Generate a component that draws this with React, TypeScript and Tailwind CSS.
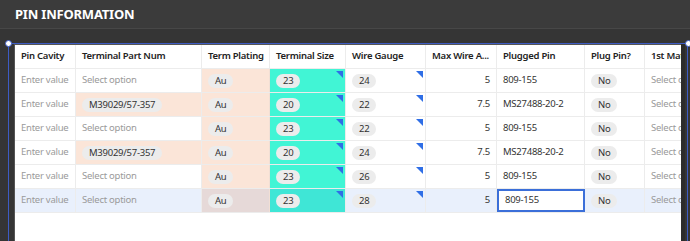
import React from "react";

const cols = [
  { name: "Pin Cavity", w: 61 },
  { name: "Terminal Part Num", w: 126 },
  { name: "Term Plating", w: 68 },
  { name: "Terminal Size", w: 76 },
  { name: "Wire Gauge", w: 80 },
  { name: "Max Wire A...", w: 71 },
  { name: "Plugged Pin", w: 88 },
  { name: "Plug Pin?", w: 60 },
  { name: "1st Mat...", w: 80 },
];

const rows = [
  { part: "", size: "23", gauge: "24", max: "5", plug: "809-155" },
  { part: "M39029/57-357", size: "20", gauge: "22", max: "7.5", plug: "MS27488-20-2" },
  { part: "", size: "23", gauge: "22", max: "5", plug: "809-155" },
  { part: "M39029/57-357", size: "20", gauge: "24", max: "7.5", plug: "MS27488-20-2" },
  { part: "", size: "23", gauge: "26", max: "5", plug: "809-155" },
  { part: "", size: "23", gauge: "28", max: "5", plug: "809-155" },
];

function Pill({ text }: { text: string }) {
  return (
    <span className="inline-flex h-[14px] items-center rounded-full bg-[#ececec] px-[7px] text-[9.5px] leading-none text-[#333]">
      {text}
    </span>
  );
}

function Tri() {
  return (
    <svg className="absolute right-[2px] top-[2px]" width="7" height="7" viewBox="0 0 7 7">
      <polygon points="0,0 7,0 7,7" fill="#2f6ee6" />
    </svg>
  );
}

export default function App() {
  return (
    <div
      className="relative h-[241px] w-[690px] overflow-hidden bg-[#353535] tracking-[-0.25px]"
      style={{ fontFamily: '"Noto Sans", "Open Sans", sans-serif' }}
    >
      <div className="flex h-[29px] items-center border-b border-[#474747] bg-[#3b3b3b] pl-[15px] pt-[1px]">
        <span className="text-[13px] font-bold tracking-[-0.2px] text-white">PIN INFORMATION</span>
      </div>

      <div className="pl-[14px] pt-[15px]">
        <div className="h-[200px] w-[668px] overflow-hidden border border-[#555] bg-white">
          <div className="flex h-[24px] border-b border-[#ececec]">
            {cols.map((c) => (
              <div
                key={c.name}
                className="flex shrink-0 items-center border-r border-[#ececec] px-[6px] text-[9.5px] font-semibold text-[#222]"
                style={{ width: c.w }}
              >
                <span className="whitespace-nowrap">{c.name}</span>
              </div>
            ))}
          </div>
          {rows.map((r, i) => {
            const sel = i === 5;
            return (
              <div
                key={i}
                className={`flex h-[24px] border-b border-[#ececec] text-[9.5px] ${sel ? "bg-[#e9f0fc]" : "bg-white"}`}
              >
                <div className="flex w-[61px] shrink-0 items-center border-r border-[#ececec] px-[6px] text-[#9a9a9a] whitespace-nowrap">
                  Enter value
                </div>
                <div
                  className={`flex w-[126px] shrink-0 items-center border-r border-[#ececec] px-[6px] whitespace-nowrap ${
                    r.part ? "bg-[#fbe5d8]" : "text-[#9a9a9a]"
                  }`}
                >
                  {r.part ? <Pill text={r.part} /> : "Select option"}
                </div>
                <div
                  className={`flex w-[68px] shrink-0 items-center border-r border-[#f1dfd5] px-[6px] ${
                    sel ? "bg-[#e6d9d8]" : "bg-[#fbe5d8]"
                  }`}
                >
                  <Pill text="Au" />
                </div>
                <div
                  className={`relative flex w-[76px] shrink-0 items-center border-r border-[#ececec] px-[6px] ${
                    sel ? "bg-[#3fe6d6]" : "bg-[#41f5d5]"
                  }`}
                >
                  <Pill text={r.size} />
                  <Tri />
                </div>
                <div className="relative flex w-[80px] shrink-0 items-center border-r border-[#ececec] px-[6px]">
                  <Pill text={r.gauge} />
                  <Tri />
                </div>
                <div className="flex w-[71px] shrink-0 items-center justify-end border-r border-[#ececec] px-[6px] text-[#333]">
                  {r.max}
                </div>
                <div
                  className={`flex w-[88px] shrink-0 items-center px-[6px] text-[#333] whitespace-nowrap ${
                    sel ? "border-2 border-[#3b6fd9] bg-white px-[5px]" : "border-r border-[#ececec]"
                  }`}
                >
                  {r.plug}
                </div>
                <div className="flex w-[60px] shrink-0 items-center border-r border-[#ececec] px-[6px]">
                  <Pill text="No" />
                </div>
                <div className="flex w-[80px] shrink-0 items-center px-[6px] text-[#9a9a9a] whitespace-nowrap">
                  Select option
                </div>
              </div>
            );
          })}
        </div>
      </div>

      {/* right dark strip */}
      <div className="absolute right-[5px] top-[44px] h-[197px] w-[4px] bg-[#2c2c2c]" />

      {/* selection frame overlay */}
      <div className="pointer-events-none absolute left-[8px] top-[43px] h-[198px] w-[680px] border-l-[1.5px] border-r-[1.5px] border-t-[1.5px] border-[#3d5cc4]" />
      <div className="absolute left-[5px] top-[40px] h-[7px] w-[7px] rounded-full border-[1.5px] border-[#3d5cc4] bg-white" />
      <div className="absolute left-[685px] top-[40px] h-[7px] w-[7px] rounded-full border-[1.5px] border-[#3d5cc4] bg-white" />
    </div>
  );
}
